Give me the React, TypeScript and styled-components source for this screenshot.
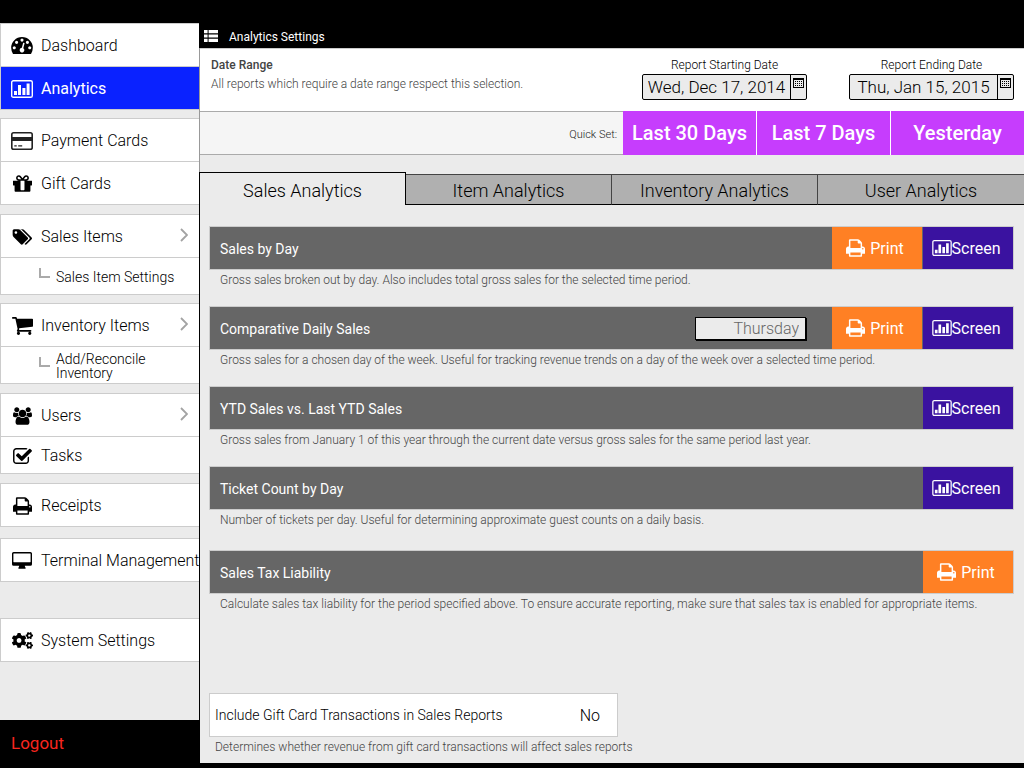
import React, { useState } from "react";
import styled, { createGlobalStyle, css } from "styled-components";
import { FaCogs } from "react-icons/fa";

const GlobalStyle = createGlobalStyle`
  *, *::before, *::after { box-sizing: border-box; }
  body {
    margin: 0;
    background: #000;
    color: #000;
    font-family: Roboto, "Liberation Sans", Arial, Helvetica, sans-serif;
    font-weight: 300;
  }
  button, input, select { font-family: inherit; font-weight: inherit; margin: 0; }
  a { color: inherit; text-decoration: none; }
  h1, h2, p { margin: 0; font-weight: inherit; }
`;

/* ---------- icons ---------- */

const Svg = styled.svg<{ $w: number; $h: number }>`
  display: block;
  flex: none;
  width: ${(p) => p.$w}px;
  height: ${(p) => p.$h}px;
  fill: currentColor;
`;

const PATHS = {
  dashboard:
    "M384 1152q0-53-37.5-90.5t-90.5-37.5-90.5 37.5-37.5 90.5 37.5 90.5 90.5 37.5 90.5-37.5 37.5-90.5zm192-448q0-53-37.5-90.5t-90.5-37.5-90.5 37.5-37.5 90.5 37.5 90.5 90.5 37.5 90.5-37.5 37.5-90.5zm428 481l101-382q6-26-7.5-48.5t-38.5-29.5-48 6.5-30 39.5l-101 382q-60 5-107 43.5t-63 98.5q-20 77 20 146t117 89 146-20 89-117q16-60-6-117t-72-91zm660-33q0-53-37.5-90.5t-90.5-37.5-90.5 37.5-37.5 90.5 37.5 90.5 90.5 37.5 90.5-37.5 37.5-90.5zm-640-640q0-53-37.5-90.5t-90.5-37.5-90.5 37.5-37.5 90.5 37.5 90.5 90.5 37.5 90.5-37.5 37.5-90.5zm448 192q0-53-37.5-90.5t-90.5-37.5-90.5 37.5-37.5 90.5 37.5 90.5 90.5 37.5 90.5-37.5 37.5-90.5zm320 448q0 261-141 483-19 29-54 29h-1402q-35 0-54-29-141-221-141-483 0-182 71-348t191-286 286-191 348-71 348 71 286 191 191 286 71 348z",
  gift: "M1056 1356v-716h-320v716q0 25 18 38.5t46 13.5h192q28 0 46-13.5t18-38.5zm-456-844h195l-126-161q-26-31-69-31-40 0-68 28t-28 68 28 68 68 28zm688-96q0-40-28-68t-68-28q-43 0-69 31l-125 161h194q40 0 68-28t28-68zm376 256v320q0 14-9 23t-23 9h-96v416q0 40-28 68t-68 28h-1088q-40 0-68-28t-28-68v-416h-96q-14 0-23-9t-9-23v-320q0-14 9-23t23-9h440q-93 0-158.5-65.5t-65.5-158.5 65.5-158.5 158.5-65.5q107 0 168 77l128 165 128-165q61-77 168-77 93 0 158.5 65.5t65.5 158.5-65.5 158.5-158.5 65.5h440q14 0 23 9t9 23z",
  tags: "M576 448q0-53-37.5-90.5t-90.5-37.5-90.5 37.5-37.5 90.5 37.5 90.5 90.5 37.5 90.5-37.5 37.5-90.5zm1067 576q0 53-37 90l-491 492q-39 37-91 37-53 0-90-37l-715-716q-38-37-64.5-101t-26.5-117v-416q0-52 38-90t90-38h416q53 0 117 26.5t102 64.5l715 714q37 39 37 91zm384 0q0 53-37 90l-491 492q-39 37-91 37-36 0-59-14t-53-45l470-470q37-37 37-90 0-52-37-91l-715-714q-38-38-102-64.5t-117-26.5h224q53 0 117 26.5t102 64.5l715 714q37 39 37 91z",
  cart: "M704 1536q0 52-38 90t-90 38-90-38-38-90 38-90 90-38 90 38 38 90zm896 0q0 52-38 90t-90 38-90-38-38-90 38-90 90-38 90 38 38 90zm128-1088v512q0 24-16.5 42.5t-40.5 21.5l-1044 122q13 60 13 70 0 16-24 64h920q26 0 45 19t19 45-19 45-45 19h-1024q-26 0-45-19t-19-45q0-11 8-31.5t16-36 21.5-40 15.5-29.5l-177-823h-204q-26 0-45-19t-19-45 19-45 45-19h256q16 0 28.5 6.5t19.5 15.5 13 24.5 8 26 5.5 29.5 4.5 26h1201q26 0 45 19t19 45z",
  users:
    "M593 896q-162 5-265 128h-134q-82 0-138-40.5t-56-118.5q0-353 124-353 6 0 43.5 21t97.5 42.5 119 21.5q67 0 133-23-5 37-5 66 0 139 81 256zm1071 637q0 120-73 189.5t-194 69.5h-874q-121 0-194-69.5t-73-189.5q0-53 3.5-103.5t14-109 26.5-108.5 43-97.5 62-81 85.5-53.5 111.5-20q10 0 43 21.5t73 48 107 48 135 21.5 135-21.5 107-48 73-48 43-21.5q61 0 111.5 20t85.5 53.5 62 81 43 97.5 26.5 108.5 14 109 3.5 103.5zm-1024-1277q0 106-75 181t-181 75-181-75-75-181 75-181 181-75 181 75 75 181zm704 384q0 159-112.5 271.5t-271.5 112.5-271.5-112.5-112.5-271.5 112.5-271.5 271.5-112.5 271.5 112.5 112.5 271.5zm576 225q0 78-56 118.5t-138 40.5h-134q-103-123-265-128 81-117 81-256 0-29-5-66 66 23 133 23 59 0 119-21.5t97.5-42.5 43.5-21q124 0 124 353zm-128-609q0 106-75 181t-181 75-181-75-75-181 75-181 181-75 181 75 75 181z",
  tasks:
    "M1472 930v318q0 119-84.5 203.5t-203.5 84.5h-832q-119 0-203.5-84.5t-84.5-203.5v-832q0-119 84.5-203.5t203.5-84.5h832q63 0 117 25 15 7 18 23 3 17-9 29l-49 49q-10 10-23 10-3 0-9-2-23-6-45-6h-832q-66 0-113 47t-47 113v832q0 66 47 113t113 47h832q66 0 113-47t47-113v-254q0-13 9-22l64-64q10-10 23-10 6 0 12 3 20 8 20 29zm231-489l-814 814q-24 24-57 24t-57-24l-430-430q-24-24-24-57t24-57l110-110q24-24 57-24t57 24l263 263 647-647q24-24 57-24t57 24l110 110q24 24 24 57t-24 57z",
  print:
    "M448 1536h896v-256h-896v256zm0-640h896v-384h-160q-40 0-68-28t-28-68v-160h-640v640zm1152 64q0-26-19-45t-45-19-45 19-19 45 19 45 45 19 45-19 19-45zm128 0v416q0 13-9.5 22.5t-22.5 9.5h-224v160q0 40-28 68t-68 28h-960q-40 0-68-28t-28-68v-160h-224q-13 0-22.5-9.5t-9.5-22.5v-416q0-79 56.5-135.5t135.5-56.5h64v-544q0-40 28-68t68-28h672q40 0 88 20t76 48l152 152q28 28 48 76t20 88v256h64q79 0 135.5 56.5t56.5 135.5z",
};

const DashboardIcon = () => (
  <Svg $w={22} $h={17} viewBox="0 256 1792 1408" aria-hidden><path d={PATHS.dashboard} /></Svg>
);
const GiftIcon = () => (
  <Svg $w={19} $h={17} viewBox="128 192 1536 1344" aria-hidden><path d={PATHS.gift} /></Svg>
);
const TagsIcon = () => (
  <Svg $w={20} $h={16} viewBox="64 128 1963 1515" aria-hidden><path d={PATHS.tags} /></Svg>
);
const CartIcon = () => (
  <Svg $w={21} $h={18} viewBox="64 256 1664 1408" aria-hidden><path d={PATHS.cart} /></Svg>
);
const UsersIcon = () => (
  <Svg $w={19} $h={18} viewBox="0 0 1920 1792" aria-hidden><path d={PATHS.users} /></Svg>
);
const TasksIcon = () => (
  <Svg $w={19} $h={16} viewBox="64 128 1664 1408" aria-hidden><path d={PATHS.tasks} /></Svg>
);
const PrintIcon = () => (
  <Svg $w={19} $h={18} viewBox="64 128 1664 1536" aria-hidden><path d={PATHS.print} /></Svg>
);
const ChartIcon = ({ w = 22, h = 18 }: { w?: number; h?: number }) => (
  <Svg $w={w} $h={h} viewBox="0 0 22 18" aria-hidden>
    <rect x="0.7" y="0.7" width="20.6" height="16.6" rx="1.6" fill="none" stroke="currentColor" strokeWidth="1.4" />
    <path d="M3 11h3v4H3zM7 5h3v10H7zM11.4 8h3v7h-3zM15.6 3.6h3V15h-3z" />
  </Svg>
);
const CardIcon = () => (
  <Svg $w={22} $h={18} viewBox="0 0 22 18" aria-hidden>
    <rect x="0.8" y="0.8" width="20.4" height="16.4" rx="1.8" fill="none" stroke="#222" strokeWidth="1.6" />
    <path d="M1 5h20v4H1zM3.3 13.3h2.4v1.3H3.3zM7.2 13.3h4v1.3h-4z" fill="#222" />
  </Svg>
);
const DesktopIcon = () => (
  <Svg $w={20} $h={17} viewBox="0 0 20 17" aria-hidden>
    <path fillRule="evenodd" d="M1.6 0h16.8Q20 0 20 1.6v10.6q0 1.6-1.6 1.6h-5.6q0 .9.8 1.9v.6q0 .5-.5.5H6.9q-.5 0-.5-.5v-.6q.8-1 .8-1.9H1.6Q0 13.8 0 12.2V1.6Q0 0 1.6 0zm.2 1.4q-.4 0-.4.4v8q0 .4.4.4h16.4q.4 0 .4-.4v-8q0-.4-.4-.4z" />
  </Svg>
);
const ListIcon = () => (
  <Svg $w={14} $h={12} viewBox="0 0 14 12" aria-hidden>
    <path d="M0 0h3.6v3.2H0zM4.6 0H14v3.2H4.6zM0 4.4h3.6v3.2H0zM4.6 4.4H14v3.2H4.6zM0 8.8h3.6V12H0zM4.6 8.8H14V12H4.6z" />
  </Svg>
);
const CalendarIcon = () => (
  <Svg $w={11} $h={10} viewBox="0 0 11 10" aria-hidden>
    <path fillRule="evenodd" d="M0 0h11v10H0zM1 2v7h9V2z" />
    <path d="M2 3h1v1H2zM4 3h1v1H4zM6 3h1v1H6zM8 3h1v1H8zM2 5h1v1H2zM4 5h1v1H4zM6 5h1v1H6zM8 5h1v1H8zM2 7h1v1H2zM4 7h1v1H4zM6 7h1v1H6zM8 7h1v1H8z" />
  </Svg>
);
const Chevron = styled(({ className }: { className?: string }) => (
  <svg className={className} viewBox="0 0 8 14" aria-hidden>
    <path d="M1 1l6 6-6 6" fill="none" stroke="#a3a3a3" strokeWidth="1.8" />
  </svg>
))`
  width: 8px;
  height: 14px;
  margin: 0 11px 4px auto;
`;
const Elbow = styled.span`
  flex: none;
  width: 11px;
  height: 10px;
  margin: 0 6px 8px 38px;
  border: solid #aaa;
  border-width: 0 0 2px 2px;
`;

/* ---------- shell ---------- */

const Shell = styled.div`
  display: grid;
  grid-template-columns: 199px minmax(0, 1fr);
  min-height: 100vh;
`;

const Sidebar = styled.aside`
  display: flex;
  flex-direction: column;
  padding-top: 23px;
`;

const Nav = styled.nav`
  flex: 1;
  background: #ebebeb;
`;

const NavGroup = styled.ul<{ $gap: number }>`
  list-style: none;
  margin: ${(p) => p.$gap}px 0 0;
  padding: 0;
  border: solid #ccc;
  border-width: 1px 0 1px 1px;
  background: #fff;

  &:first-child { margin-top: 0; }
  li + li { border-top: 1px solid #ccc; }
`;

const NavLink = styled.a<{ $active?: boolean; $short?: boolean }>`
  display: flex;
  align-items: center;
  height: ${(p) => (p.$short ? 36 : 42)}px;
  padding-top: 2px;
  font-size: 16px;
  line-height: 20px;
  white-space: nowrap;
  ${(p) =>
    p.$active &&
    css`
      background: #0a22ff;
      color: #fff;
      font-weight: 400;
    `}
`;

const SubLink = styled(NavLink)`
  font-size: 14px;
  line-height: 14px;
  white-space: normal;
`;

const IconSlot = styled.span`
  display: flex;
  justify-content: center;
  flex: none;
  width: 22px;
  margin: 0 8px 1px 10px;
`;

const SidebarFooter = styled.footer`
  height: 48px;
  padding: 0 11px 2px;
  display: flex;
  align-items: center;
  background: #000;
`;

const Logout = styled.a`
  color: #f8261f;
  font-size: 17px;
  line-height: 20px;
  font-weight: 400;
`;

const Main = styled.main`
  display: flex;
  flex-direction: column;
  border-bottom: 5px solid #000;
`;

const TitleBar = styled.header`
  display: flex;
  align-items: center;
  gap: 11px;
  height: 48px;
  padding: 23px 5px 0;
  color: #fff;
`;

const Title = styled.h1`
  padding-top: 2px;
  font-size: 12px;
  line-height: 16px;
  font-weight: 400;
`;

/* ---------- date settings ---------- */

const Settings = styled.section`
  padding-bottom: 17px;
  background: #ebebeb;
  border-left: 1px solid #999;
`;

const DatePanel = styled.div`
  display: flex;
  height: 63px;
  padding: 8px 10px 0 11px;
  background: #fff;
  border-top: 1px solid #ccc;
`;

const RangeText = styled.div`
  flex: 1;
  color: #444;
`;

const RangeTitle = styled.h2`
  font-size: 12px;
  line-height: 16px;
  font-weight: 500;
`;

const RangeNote = styled.p`
  margin-top: 3px;
  font-size: 12px;
  line-height: 16px;
`;

const DateField = styled.div`
  width: 165px;
  text-align: center;

  & + & { margin-left: 42px; }
  label {
    display: block;
    font-size: 12px;
    line-height: 16px;
  }
`;

const DateBox = styled.div`
  display: flex;
  height: 26px;
  margin-top: 1px;
  border: 1px solid #000;
  border-radius: 2px;
  background: #ebebeb;
`;

const DateInput = styled.input`
  flex: 1;
  min-width: 0;
  padding: 0;
  border: 0;
  background: none;
  text-align: center;
  font-size: 17px;
  color: #000;
`;

const CalendarButton = styled.button`
  display: flex;
  justify-content: center;
  width: 16px;
  padding: 3px 0 0;
  border: 0;
  border-left: 1px solid #000;
  background: none;
  color: #000;
`;

const QuickRow = styled.div`
  display: flex;
  align-items: stretch;
  justify-content: flex-end;
  height: 44px;
  background: linear-gradient(#aaa, #aaa) top / 100% 1px no-repeat,
    linear-gradient(#aaa, #aaa) bottom / 100% 1px no-repeat, #f5f5f5;
`;

const QuickLabel = styled.span`
  align-self: center;
  margin: 2px 6px 0 0;
  font-size: 11px;
  color: #222;
`;

const QuickButton = styled.button`
  width: 133px;
  padding: 0;
  border: 0;
  background: #c63dfd;
  color: #fff;
  font-size: 20px;
  font-weight: 500;

  & + & {
    width: 134px;
    border-left: 1px solid #fff;
  }
`;

/* ---------- tabs and reports ---------- */

const Tabs = styled.div`
  display: grid;
  grid-template-columns: 207px repeat(3, 1fr);
  align-items: end;
  height: 33px;
  background: #ebebeb;
`;

const Tab = styled.button<{ $active: boolean }>`
  height: 31px;
  padding: 2px 0 0;
  border: solid #444;
  border-width: 1px 1px 1px 0;
  border-bottom-color: #000;
  background: #b0b0b0;
  color: #000;
  font-size: 18px;
  &:last-child { border-right: 0; }
  ${(p) =>
    p.$active &&
    css`
      height: 33px;
      padding-top: 3px;
      border: solid #000;
      border-width: 1px 1px 0 1px;
      background: #ebebeb;
    `}
`;

const Panel = styled.section`
  display: flex;
  flex: 1;
  flex-direction: column;
  padding: 21px 10px 6px 9px;
  background: #ebebeb;
  border-left: 1px solid #000;
`;

const Report = styled.article`
  margin-bottom: 16px;
  &:last-of-type { margin-top: 4px; }
`;

const ReportBar = styled.div`
  display: flex;
  align-items: stretch;
  height: 44px;
  background: #666;
  border: 1px solid #ccc;
`;

const ReportTitle = styled.h2`
  flex: 1;
  align-self: center;
  padding: 1px 0 0 10px;
  color: #fff;
  font-size: 14px;
  line-height: 20px;
  font-weight: 400;
`;

const Note = styled.p`
  padding-left: 11px;
  font-size: 12px;
  line-height: 20px;
  color: #444;
`;

const Action = styled.button<{ $kind: "print" | "screen" }>`
  display: flex;
  align-items: center;
  justify-content: center;
  gap: ${(p) => (p.$kind === "print" ? 5 : 0)}px;
  width: 90px;
  padding: 0 4px 0 0;
  border: 0;
  background: ${(p) => (p.$kind === "print" ? "#ff8024" : "#3a12a0")};
  color: #fff;
  font-size: 16px;
  font-weight: 400;

  & + & { margin-left: 1px; }
`;

const DaySelect = styled.select`
  align-self: center;
  appearance: none;
  width: 111px;
  height: 23px;
  margin-right: 26px;
  padding: 0 6px;
  border: 1px solid #000;
  border-radius: 0;
  background: #ebebeb;
  box-shadow: 1px 1px 0 #000;
  color: #666;
  font-size: 16px;
  text-align-last: right;
`;

const OptionArea = styled.div`
  margin-top: auto;
`;

const OptionBox = styled.div`
  display: flex;
  align-items: center;
  width: 409px;
  height: 44px;
  padding: 0 17px 0 5px;
  border: 1px solid #ccc;
  background: #fff;

  label {
    flex: 1;
    font-size: 14px;
  }
`;

const Toggle = styled.button`
  padding: 0;
  border: 0;
  background: none;
  color: #000;
  font-size: 16px;
`;

const OptionNote = styled(Note)`
  padding-left: 6px;
`;

/* ---------- data ---------- */

type NavEntry = {
  label: React.ReactNode;
  icon?: React.ReactNode;
  active?: boolean;
  short?: boolean;
  more?: boolean;
};

const NAV: { gap: number; items: NavEntry[] }[] = [
  {
    gap: 0,
    items: [
      { label: "Dashboard", icon: <DashboardIcon /> },
      { label: "Analytics", icon: <ChartIcon />, active: true },
    ],
  },
  {
    gap: 8,
    items: [
      { label: "Payment Cards", icon: <CardIcon /> },
      { label: "Gift Cards", icon: <GiftIcon /> },
    ],
  },
  {
    gap: 9,
    items: [
      { label: "Sales Items", icon: <TagsIcon />, more: true },
      { label: "Sales Item Settings" },
    ],
  },
  {
    gap: 8,
    items: [
      { label: "Inventory Items", icon: <CartIcon />, more: true },
      { label: <>Add/Reconcile<br />Inventory</> },
    ],
  },
  {
    gap: 9,
    items: [
      { label: "Users", icon: <UsersIcon />, more: true },
      { label: "Tasks", icon: <TasksIcon />, short: true },
    ],
  },
  { gap: 9, items: [{ label: "Receipts", icon: <PrintIcon /> }] },
  { gap: 11, items: [{ label: "Terminal Management", icon: <DesktopIcon /> }] },
  { gap: 36, items: [{ label: "System Settings", icon: <FaCogs size={21} aria-hidden /> }] },
];

const TABS = ["Sales Analytics", "Item Analytics", "Inventory Analytics", "User Analytics"];
const DAYS = ["Sunday", "Monday", "Tuesday", "Wednesday", "Thursday", "Friday", "Saturday"];

const REPORTS = [
  {
    title: "Sales by Day",
    note: "Gross sales broken out by day. Also includes total gross sales for the selected time period.",
    print: true,
    screen: true,
  },
  {
    title: "Comparative Daily Sales",
    note: "Gross sales for a chosen day of the week. Useful for tracking revenue trends on a day of the week over a selected time period.",
    day: true,
    print: true,
    screen: true,
  },
  {
    title: "YTD Sales vs. Last YTD Sales",
    note: "Gross sales from January 1 of this year through the current date versus gross sales for the same period last year.",
    screen: true,
  },
  {
    title: "Ticket Count by Day",
    note: "Number of tickets per day. Useful for determining approximate guest counts on a daily basis.",
    screen: true,
  },
  {
    title: "Sales Tax Liability",
    note: "Calculate sales tax liability for the period specified above. To ensure accurate reporting, make sure that sales tax is enabled for appropriate items.",
    print: true,
  },
];

function DatePicker({ id, label, value }: { id: string; label: string; value: string }) {
  return (
    <DateField>
      <label htmlFor={id}>{label}</label>
      <DateBox>
        <DateInput id={id} type="text" defaultValue={value} />
        <CalendarButton type="button" aria-label={`Choose ${label}`}>
          <CalendarIcon />
        </CalendarButton>
      </DateBox>
    </DateField>
  );
}

export default function App() {
  const [tab, setTab] = useState(0);
  const [giftCards, setGiftCards] = useState(false);

  return (
    <>
      <GlobalStyle />
      <Shell>
        <Sidebar>
          <Nav>
            {NAV.map((group, g) => (
              <NavGroup key={g} $gap={group.gap}>
                {group.items.map((item, i) => (
                  <li key={i}>
                    {item.icon ? (
                      <NavLink href="#" $active={item.active} $short={item.short}>
                        <IconSlot>{item.icon}</IconSlot>
                        {item.label}
                        {item.more && <Chevron />}
                      </NavLink>
                    ) : (
                      <SubLink href="#" $short>
                        <Elbow />
                        <span>{item.label}</span>
                      </SubLink>
                    )}
                  </li>
                ))}
              </NavGroup>
            ))}
          </Nav>
          <SidebarFooter>
            <Logout href="#">Logout</Logout>
          </SidebarFooter>
        </Sidebar>

        <Main>
          <TitleBar>
            <ListIcon />
            <Title>Analytics Settings</Title>
          </TitleBar>

          <Settings>
            <DatePanel>
              <RangeText>
                <RangeTitle>Date Range</RangeTitle>
                <RangeNote>All reports which require a date range respect this selection.</RangeNote>
              </RangeText>
              <DatePicker id="start" label="Report Starting Date" value="Wed, Dec 17, 2014" />
              <DatePicker id="end" label="Report Ending Date" value="Thu, Jan 15, 2015" />
            </DatePanel>
            <QuickRow>
              <QuickLabel>Quick Set:</QuickLabel>
              <QuickButton type="button">Last 30 Days</QuickButton>
              <QuickButton type="button">Last 7 Days</QuickButton>
              <QuickButton type="button">Yesterday</QuickButton>
            </QuickRow>
          </Settings>

          <Tabs role="tablist">
            {TABS.map((name, i) => (
              <Tab
                key={name}
                type="button"
                role="tab"
                aria-selected={tab === i}
                $active={tab === i}
                onClick={() => setTab(i)}
              >
                {name}
              </Tab>
            ))}
          </Tabs>

          <Panel>
            {REPORTS.map((r) => (
              <Report key={r.title}>
                <ReportBar>
                  <ReportTitle>{r.title}</ReportTitle>
                  {r.day && (
                    <DaySelect aria-label="Day of the week" defaultValue="Thursday">
                      {DAYS.map((d) => (
                        <option key={d}>{d}</option>
                      ))}
                    </DaySelect>
                  )}
                  {r.print && (
                    <Action type="button" $kind="print">
                      <PrintIcon />
                      Print
                    </Action>
                  )}
                  {r.screen && (
                    <Action type="button" $kind="screen">
                      <ChartIcon w={20} h={16} />
                      Screen
                    </Action>
                  )}
                </ReportBar>
                <Note>{r.note}</Note>
              </Report>
            ))}

            <OptionArea>
              <OptionBox>
                <label htmlFor="gift-cards">Include Gift Card Transactions in Sales Reports</label>
                <Toggle id="gift-cards" type="button" onClick={() => setGiftCards(!giftCards)}>
                  {giftCards ? "Yes" : "No"}
                </Toggle>
              </OptionBox>
              <OptionNote>Determines whether revenue from gift card transactions will affect sales reports</OptionNote>
            </OptionArea>
          </Panel>
        </Main>
      </Shell>
    </>
  );
}
